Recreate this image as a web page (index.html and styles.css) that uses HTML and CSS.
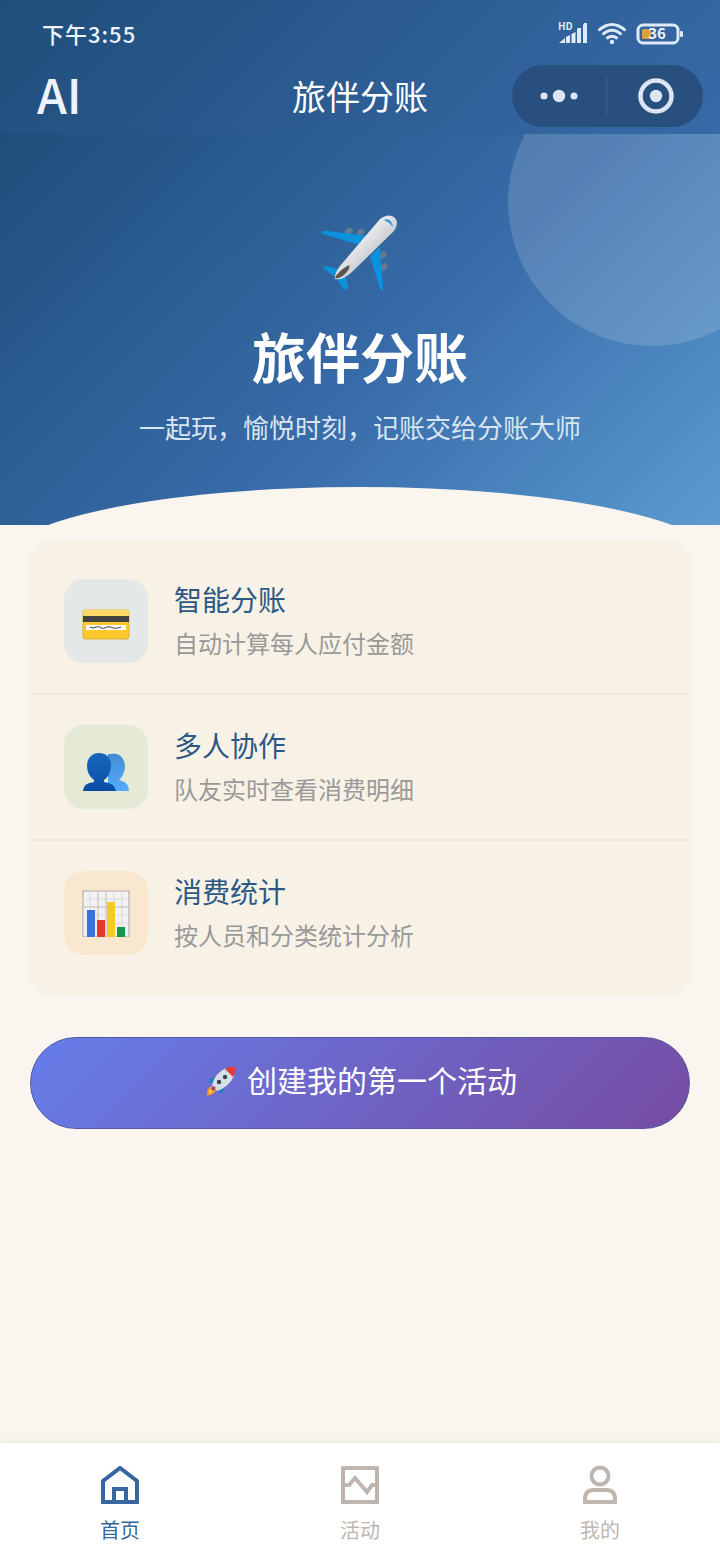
FILE: index.html
```
<!DOCTYPE html>
<html lang="zh-CN">

<head>
  <meta charset="UTF-8">
  <meta name="viewport" content="width=device-width, initial-scale=1">
  <title>旅伴分账</title>
  <link rel="stylesheet" href="styles.css">
</head>

<body>

  <header class="topbar">
    <div class="status">
      <span class="time">下午3:55</span>
      <div class="status-icons">
        <svg width="32" height="36" viewBox="-2 -6 32 36" fill="#dfeaf8">
          <text x="0" y="8" class="hd">HD</text>
          <path d="M1 21 L7 16 V21 Z M8 15 L12 13 V21 H8 Z M13.500 12 L17.500 10 V21 H13.500 Z M19 7 L20 6 H23 V21 H19 Z M25 3 L26 1 H29 V21 H25 Z" />
        </svg>
        <svg width="30" height="24" viewBox="0 0 30 24" fill="none" stroke="#dfeaf8" stroke-width="3">
          <path d="M1.500 8.500 Q15 -3.500 28.500 8.500 M5.500 12.500 Q15 4 24.500 12.500 M9.500 16.500 Q15 12 20.500 16.500" />
          <circle cx="15" cy="20" r="2.200" fill="#dfeaf8" stroke="none" />
        </svg>
        <svg width="48" height="24" viewBox="0 0 48 24">
          <rect x="2" y="3" width="40" height="18" rx="5" fill="none" stroke="#dfeaf8" stroke-width="3" />
          <rect x="6" y="7" width="9" height="10" rx="1" fill="#dba13b" />
          <rect x="44" y="9" width="3" height="6" rx="1" fill="#dfeaf8" />
          <text x="21" y="17" class="level">36</text>
        </svg>
      </div>
    </div>
    <nav class="titlebar">
      <span class="brand">AI</span>
      <span class="page-title">旅伴分账</span>
      <div class="capsule">
        <button type="button" aria-label="更多">
          <svg width="40" height="16" viewBox="0 0 40 16" fill="#dce5f1">
            <circle cx="5" cy="8" r="3.500" />
            <circle cx="20" cy="8" r="6.200" />
            <circle cx="35" cy="8" r="3.500" />
          </svg>
        </button>
        <button type="button" aria-label="关闭">
          <svg width="36" height="36" viewBox="0 0 36 36" fill="#dce5f1">
            <circle cx="18" cy="18" r="15.500" fill="none" stroke="#dce5f1" stroke-width="4.500" />
            <circle cx="18" cy="18" r="6.200" />
          </svg>
        </button>
      </div>
    </nav>
  </header>

  <section class="hero">
    <svg class="plane" width="80" height="80" viewBox="0 0 80 80">
      <defs>
        <linearGradient id="body" x1="0" y1="0" x2="1" y2="1">
          <stop offset="0.350" stop-color="#f0f0f2" />
          <stop offset="0.700" stop-color="#bfc1c5" />
        </linearGradient>
      </defs>
      <g fill="#667a8f">
        <ellipse cx="29" cy="17" rx="4" ry="3" transform="rotate(-25 29 17)" />
        <ellipse cx="41" cy="18" rx="4" ry="3" transform="rotate(-25 41 18)" />
        <ellipse cx="63" cy="41" rx="3" ry="4" transform="rotate(25 63 41)" />
        <ellipse cx="64" cy="53" rx="3" ry="4" transform="rotate(25 64 53)" />
      </g>
      <path d="M1 19 Q2 16 7 17 L49 22 L40 31 L3 20 Z" fill="#0b93de" />
      <path d="M50 42 L60 33 L63 74 Q62 78 60 75 Z" fill="#0b93de" />
      <path d="M3 54 Q5 51 9 53 L24 56 L17 64 Z" fill="#0b93de" />
      <path d="M17 65 L25 60 L28 72 Q28 76 24 76 Z" fill="#0b93de" />
      <path d="M60 5 Q68 -1 74 3 Q80 8 74 17 L32 58 Q22 67 15 65 Q14 60 20 52 Z" fill="url(#body)" />
      <path d="M15 64 Q18 57 29 51 Q31 54 25 60 Q20 65 15 64 Z" fill="#5d5550" />
      <path d="M64 6 Q71 3 73 13 Q69 8 64 6 Z" fill="#2a9bd7" />
    </svg>
    <h1>旅伴分账</h1>
    <p>一起玩，愉悦时刻，记账交给分账大师</p>
  </section>

  <main>
    <ul class="features">
      <li>
        <div class="icon icon-card">
          <svg width="48" height="48" viewBox="0 0 48 48">
            <rect x="1" y="13" width="46" height="29" rx="2" fill="#fdc92f" stroke="#dfae35" />
            <path d="M1 19 V15 Q1 13 3 13 H45 Q47 13 47 15 V19 Z" fill="#fdd866" />
            <rect x="1" y="19" width="46" height="6" fill="#424242" />
            <rect x="4" y="28" width="40" height="5" fill="#fff" />
            <path d="M8 30 Q11 32 14 30 Q17 29 19 31 Q21 32 25 30 Q28 29 31 31 Q35 32 39 30" fill="none" stroke="#424242" />
          </svg>
        </div>
        <div class="text">
          <h2>智能分账</h2>
          <p>自动计算每人应付金额</p>
        </div>
      </li>
      <li>
        <div class="icon icon-people">
          <svg width="48" height="48" viewBox="0 0 48 48">
            <defs>
              <linearGradient id="back" x1="0" y1="0" x2="0" y2="1">
                <stop offset="0" stop-color="#428cd2" />
                <stop offset="1" stop-color="#55adff" />
              </linearGradient>
              <linearGradient id="front" x1="0" y1="0" x2="0" y2="1">
                <stop offset="0" stop-color="#1768bd" />
                <stop offset="1" stop-color="#0b4da5" />
              </linearGradient>
            </defs>
            <path d="M29 12 C38 10 43 17 43 25 Q42 34 37 38 Q47 40 47 49 H26 V12 Z" transform="translate(0 -1)" fill="url(#back)" />
            <path d="M17 10 C25 10 29 15 29 23 Q28 33 22 37 V39 Q33 40 34 48 H1 Q1 40 12 39 V37 Q5 32 5 23 C5 15 10 10 17 10 Z" fill="url(#front)" />
          </svg>
        </div>
        <div class="text">
          <h2>多人协作</h2>
          <p>队友实时查看消费明细</p>
        </div>
      </li>
      <li>
        <div class="icon icon-chart">
          <svg width="48" height="48" viewBox="0 0 48 48">
            <rect x="1" y="2" width="46" height="46" fill="#f2f2f2" stroke="#a9a9a6" />
            <path d="M1 10 H47 M1 26 H47 M1 34 H47 M1 42 H47 M8 2 V48 M32 2 V48 M40 2 V48" stroke="#dcdcdc" />
            <path d="M1 18 H47 M16 2 V48 M24 2 V48" stroke="#bfbfbf" />
            <rect x="5" y="21" width="8" height="27" fill="#3772df" />
            <rect x="15" y="31" width="8" height="17" fill="#e03b2d" />
            <rect x="25" y="13" width="8" height="35" fill="#f4cb25" />
            <rect x="35" y="38" width="8" height="10" fill="#169447" />
          </svg>
        </div>
        <div class="text">
          <h2>消费统计</h2>
          <p>按人员和分类统计分析</p>
        </div>
      </li>
    </ul>

    <button type="button" class="create">
      <svg width="32" height="32" viewBox="0 0 32 32">
        <path d="M10 12 Q5 12 3 18 L9 17 Z M20 20 Q20 27 14 29 L14 24 Z" fill="#2082be" />
        <path d="M6 21 Q1 24 2 31 Q8 30 11 26 Z" fill="#f98b27" />
        <path d="M5 24 Q3 27 4 29 Q7 28 8 26 Z" fill="#fdd34d" />
        <path d="M7 20 Q10 8 21 3 L29 11 Q24 22 12 26 Z" fill="#d5dfe5" />
        <path d="M20 4 Q25 1 31 2 Q31 7 28 12 Z" fill="#e43b3c" />
        <circle cx="20" cy="12" r="2.200" fill="#37474f" />
        <circle cx="14" cy="17" r="2.200" fill="#37474f" />
        <path d="M10 22 L7 25" stroke="#a4373b" stroke-width="2" />
      </svg>
      <span>创建我的第一个活动</span>
    </button>
  </main>

  <nav class="tabs">
    <a href="#home" class="active">
      <svg width="40" height="40" viewBox="0 0 40 40" fill="none" stroke="currentColor" stroke-width="4">
        <path d="M3 37 V16 L20 3 L37 16 V37 Z" />
        <path d="M14 37 V24 H26 V37" />
      </svg>
      <span>首页</span>
    </a>
    <a href="#activity">
      <svg width="40" height="40" viewBox="0 0 40 40" fill="none" stroke="currentColor" stroke-width="4">
        <rect x="3" y="3" width="34" height="34" />
        <path d="M3 20 H9 L15 13 L27 27 L32 20 H37" />
      </svg>
      <span>活动</span>
    </a>
    <a href="#mine">
      <svg width="40" height="40" viewBox="0 0 40 40" fill="none" stroke="currentColor" stroke-width="4">
        <circle cx="20" cy="11" r="8.500" />
        <path d="M5 37 V34 Q5 25 14 25 H26 Q35 25 35 34 V37 Z" />
      </svg>
      <span>我的</span>
    </a>
  </nav>

</body>

</html>
```
FILE: styles.css
```
* {
  box-sizing: border-box;
}

body {
  margin: 0;
  min-height: 100vh;
  display: flex;
  flex-direction: column;
  background: #faf6ef;
  font-family: "Noto Sans CJK SC", sans-serif;
}

h1,
h2,
p,
ul {
  margin: 0;
  padding: 0;
  font-weight: 400;
}

svg {
  display: block;
  flex: none;
}

button {
  border: none;
  padding: 0;
  background: none;
  font-family: inherit;
  cursor: pointer;
}

.topbar {
  padding-bottom: 7px;
  background: linear-gradient(135deg, #1f4e7b, #386aa8);
  color: #edf4fd;
}

.status {
  display: flex;
  justify-content: space-between;
  align-items: center;
  height: 65px;
  padding: 2px 36px 0 42px;
}

.time {
  padding-bottom: 2px;
  font-size: 22px;
  font-weight: 500;
  letter-spacing: 1px;
}

.status-icons {
  display: flex;
  align-items: center;
  gap: 9px;
}

.hd {
  font-size: 10px;
  font-weight: 700;
}

.level {
  font-size: 15px;
  font-weight: 700;
  fill: #edf4fd;
  text-anchor: middle;
}

.titlebar {
  display: grid;
  grid-template-columns: 1fr 1fr;
  align-items: center;
  height: 62px;
  padding: 0 17px 0 37px;
}

.brand,
.page-title,
.capsule {
  grid-row: 1;
}

.brand {
  grid-column: 1;
  padding-bottom: 6px;
  font-size: 48px;
  font-weight: 500;
  line-height: 56px;
}

.page-title {
  grid-column: 1 / -1;
  justify-self: center;
  margin-left: -20px;
  padding-bottom: 2px;
  font-size: 34px;
  color: #fff;
}

.capsule {
  grid-column: 2;
  justify-self: end;
  display: flex;
  width: 191px;
  height: 62px;
  border-radius: 31px;
  background: #284f7d;
}

.capsule button {
  flex: 1;
  display: flex;
  align-items: center;
  justify-content: center;
}

.capsule button + button {
  padding-left: 3px;
  background: linear-gradient(#3b608d, #3b608d) left center / 1px 40px no-repeat;
}

.hero {
  position: relative;
  overflow: hidden;
  display: flex;
  flex-direction: column;
  align-items: center;
  padding: 80px 0 79px;
  background: linear-gradient(135deg, #1f4e7b 0%, #386ba9 55%, #5b9bd0 100%);
  color: #fff;
}

/* light circle in the corner */
.hero::before {
  content: "";
  position: absolute;
  top: -76px;
  right: -76px;
  width: 288px;
  height: 288px;
  border-radius: 50%;
  background: rgba(255, 255, 255, 0.15);
}

/* curved bottom edge */
.hero::after {
  content: "";
  position: absolute;
  left: 0;
  bottom: -38px;
  width: 100%;
  height: 76px;
  border-radius: 50% 50% 0 0 / 100% 100% 0 0;
  background: #faf6ef;
}

.hero h1 {
  margin-top: 22px;
  font-size: 54px;
  font-weight: 700;
  line-height: 80px;
}

.hero p {
  margin-top: 12px;
  font-size: 26px;
  line-height: 38px;
  color: #d9e4f1;
}

main {
  flex: 1;
  padding: 17px 30px;
}

.features {
  list-style: none;
  padding: 7px 0;
  border-radius: 24px;
  background: #f8f2e6;
  box-shadow: 0 0 6px rgba(31, 78, 121, 0.06);
}

.features li {
  display: flex;
  align-items: center;
  gap: 26px;
  height: 146px;
  padding: 0 34px;
  border-bottom: 2px solid #f0e9dd;
}

.features li:last-child {
  border-color: transparent;
}

.icon {
  display: flex;
  align-items: center;
  justify-content: center;
  width: 84px;
  height: 84px;
  border-radius: 20px;
}

.icon-card {
  background: #e4e8e7;
}

.icon-people {
  background: #e4ead6;
}

.icon-chart {
  background: #f9e7cf;
}

.text h2 {
  font-size: 28px;
  line-height: 44px;
  color: #2c5886;
}

.text p {
  font-size: 24px;
  line-height: 44px;
  color: #999;
}

.create {
  display: flex;
  align-items: center;
  justify-content: center;
  gap: 10px;
  width: 100%;
  height: 92px;
  margin-top: 43px;
  padding: 0 0 4px 2px;
  border: 1px solid #53599f;
  border-radius: 46px;
  background: linear-gradient(135deg, #667eea, #764ba2) border-box;
  color: #fff;
  font-size: 30px;
}

.create span {
  padding-bottom: 4px;
}

.tabs {
  display: flex;
  height: 117px;
  background: #fff;
  box-shadow: 0 -1px 6px rgba(60, 70, 50, 0.08);
}

.tabs a {
  flex: 1;
  display: flex;
  flex-direction: column;
  align-items: center;
  gap: 10px;
  padding-top: 22px;
  color: #bfb6b0;
  font-size: 20px;
  line-height: 30px;
  text-decoration: none;
}

.tabs .active {
  color: #3867a0;
}
```
